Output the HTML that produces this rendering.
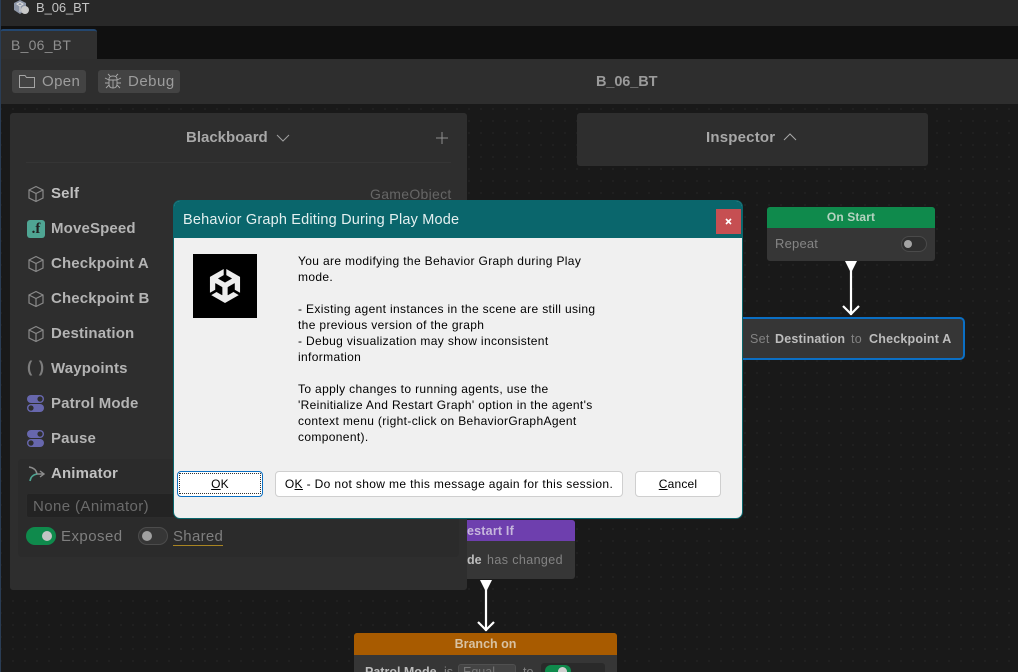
<!DOCTYPE html>
<html><head><meta charset="utf-8">
<style>
html,body{margin:0;padding:0;background:#1a1a1a}
#r{position:relative;width:1018px;height:672px;overflow:hidden;background-color:#191919;background-image:radial-gradient(circle at 1px 1px,#272727 0.6px,transparent 1px);background-size:12px 12px;font-family:"Liberation Sans",sans-serif}
#r div,#r span.a,#r svg{position:absolute}
.t{white-space:nowrap;line-height:16px}
.l{left:51px;font-size:15px;font-weight:bold;color:#b4b4b4;letter-spacing:.15px;white-space:nowrap;line-height:18px}
.d{left:298px;font-size:12px;color:#000;white-space:nowrap;line-height:16px;letter-spacing:.35px}
.b{background:#fff;border:1px solid #cfcfcf;border-radius:4px;box-sizing:border-box;height:26px;line-height:25px;font-size:12px;text-align:center;color:#000;white-space:nowrap;letter-spacing:.18px}
</style></head><body><div id="r">
<div style="left:0;top:0;width:1018px;height:26px;background:#282828"></div>
<div style="left:0;top:0;width:1px;height:672px;background:#2a3d55;z-index:5"></div>
<svg style="left:12px;top:0" width="18" height="16" viewBox="0 0 18 16"><path d="M2 3L8 0L14 3V10L8 14L2 10Z" fill="#8e97a8"/><path d="M5 4L8 2.5L11 4L8 6ZM8 6V12" stroke="#ddd" fill="none"/><circle cx="13" cy="10" r="4" fill="#c9c9c9"/></svg>
<div class="t" style="left:36px;top:0;font-size:13px;color:#c4c4c4;letter-spacing:-.1px">B_06_BT</div>
<div style="left:0;top:26px;width:1018px;height:33px;background:#101010"></div>
<div style="left:0;top:29px;width:97px;height:30px;background:#303030;border-top:2px solid #24476f;border-radius:3px 3px 0 0;box-sizing:border-box"></div>
<div class="t" style="left:11px;top:37px;font-size:14px;color:#8f8f8f;letter-spacing:.25px">B_06_BT</div>
<div style="left:0;top:59px;width:1018px;height:45px;background:#2e2e2e"></div>
<div style="left:12px;top:70px;width:74px;height:23px;background:#434343;border-radius:3px"></div>
<svg style="left:18px;top:73px" width="18" height="16" viewBox="0 0 18 16"><path d="M1.5 2.5H7L8.5 4.5H16.5V14.5H1.5Z" fill="none" stroke="#a5a5a5"/></svg>
<div class="t" style="left:42px;top:74px;font-size:15px;color:#9d9d9d;letter-spacing:.4px">Open</div>
<div style="left:98px;top:70px;width:82px;height:23px;background:#434343;border-radius:3px"></div>
<svg style="left:104px;top:72px" width="18" height="18" viewBox="0 0 18 18"><path d="M5 7Q5 4 9 4T13 7V12Q13 16 9 16T5 12ZM5 8H13M9 8V16M6 4L4 2M12 4L14 2M5 8L1 6M13 8L17 6M5 11H1M13 11H17M5 13L2 16M13 13L16 16" fill="none" stroke="#a8a8a8" stroke-width=".9"/></svg>
<div class="t" style="left:128px;top:74px;font-size:15px;color:#9d9d9d;letter-spacing:.5px">Debug</div>
<div class="t" style="left:596px;top:74px;font-size:14.5px;font-weight:bold;color:#9a9a9a;letter-spacing:-.1px">B_06_BT</div>

<div style="left:10px;top:113px;width:457px;height:477px;background:#2e2e2e;border-radius:3px"></div>
<div style="left:26px;top:162px;width:425px;height:1px;background:#353535"></div>
<div class="t" style="left:186px;top:130px;font-size:15px;font-weight:bold;color:#a8a8a8;letter-spacing:0">Blackboard</div>
<svg style="left:276px;top:133px" width="14" height="10"><path d="M1 2L7 8L13 2" fill="none" stroke="#a0a0a0"/></svg>
<svg style="left:436px;top:132px" width="12" height="12"><path d="M6 0V12M0 6H12" stroke="#8f8f8f"/></svg>
<div class="t" style="left:370px;top:186px;font-size:14px;color:#666;letter-spacing:.3px">GameObject</div>

<svg width="0" height="0"><defs><g id="c"><path d="M9 1.5L16 5V13L9 16.5L2 13V5ZM2 5L9 8.5L16 5M9 8.5V16.5" fill="none" stroke="#8a8a8a" stroke-width="1.2"/></g><g id="sw"><rect x="1" y="1" width="17" height="8" rx="4" fill="#6767ad"/><rect x="1" y="10" width="17" height="8" rx="4" fill="#6767ad"/><circle cx="14" cy="5" r="2.6" fill="#2e2e2e"/><circle cx="5" cy="14" r="2.6" fill="#2e2e2e"/></g></defs></svg>
<svg style="left:27px;top:185px" width="18" height="18"><use href="#c"/></svg>
<div class="l" style="top:185px;color:#c0c0c0">Self</div>
<div style="left:27px;top:220px;width:18px;height:18px;background:#4fa593;border-radius:3px;color:#202020;font:bold 15px/18px 'Liberation Serif',serif;text-align:center">.f</div>
<div class="l" style="top:220px">MoveSpeed</div>
<svg style="left:27px;top:255px" width="18" height="18"><use href="#c"/></svg>
<div class="l" style="top:255px">Checkpoint A</div>
<svg style="left:27px;top:290px" width="18" height="18"><use href="#c"/></svg>
<div class="l" style="top:290px">Checkpoint B</div>
<svg style="left:27px;top:325px" width="18" height="18"><use href="#c"/></svg>
<div class="l" style="top:325px">Destination</div>
<div class="t" style="left:27px;top:360px;font-size:16px;font-weight:bold;color:#7d7d7d;letter-spacing:1px">( )</div>
<div class="l" style="top:360px">Waypoints</div>
<svg style="left:26px;top:394px" width="19" height="19"><use href="#sw"/></svg>
<div class="l" style="top:395px">Patrol Mode</div>
<svg style="left:26px;top:429px" width="19" height="19"><use href="#sw"/></svg>
<div class="l" style="top:430px">Pause</div>
<div style="left:18px;top:459px;width:441px;height:98px;background:#2b2b2b;border-radius:4px"></div>
<svg style="left:27px;top:465px" width="18" height="18"><path d="M2 2Q9 3 10 9H17M13 6L17 9L13 12" fill="none" stroke="#8c8c8c" stroke-width="1.4"/><path d="M3 16Q4 10 10 9" fill="none" stroke="#4fa593" stroke-width="1.6"/></svg>
<div class="l" style="top:465px;color:#c0c0c0">Animator</div>
<div style="left:26px;top:493px;width:425px;height:25px;background:#232323;border:1px solid #2c2c2c;border-radius:3px;box-sizing:border-box"></div>
<div class="t" style="left:33px;top:499px;font-size:15px;color:#6b6b6b;letter-spacing:.4px">None (Animator)</div>
<div style="left:26px;top:527px;width:30px;height:18px;background:#0f8a4c;border-radius:9px"></div>
<div style="left:42px;top:531px;width:10px;height:10px;background:#c4c4c4;border-radius:50%"></div>
<div class="t" style="left:61px;top:529px;font-size:15px;color:#7f7f7f;letter-spacing:.45px">Exposed</div>
<div style="left:138px;top:527px;width:30px;height:18px;border:1px solid #4c4c4c;background:#363636;border-radius:9px;box-sizing:border-box"></div>
<div style="left:142px;top:531px;width:10px;height:10px;background:#a0a0a0;border-radius:50%"></div>
<div class="t" style="left:173px;top:529px;font-size:15px;color:#7f7f7f;letter-spacing:.3px;border-bottom:1px solid #a98522;height:16px;padding-bottom:0">Shared</div>

<div style="left:577px;top:113px;width:351px;height:53px;background:#2e2e2e;border-radius:3px"></div>
<div class="t" style="left:706px;top:130px;font-size:15px;font-weight:bold;color:#a8a8a8;letter-spacing:.2px">Inspector</div>
<svg style="left:783px;top:133px" width="14" height="9"><path d="M1 7L7 1L13 7" fill="none" stroke="#a8a8a8"/></svg>

<div style="left:767px;top:207px;width:168px;height:54px;background:#363636;border-radius:3px;overflow:hidden"><div style="left:0;top:0;width:168px;height:21px;background:#0f8a4c;color:#b5d3c0;font:bold 12px/21px 'Liberation Sans',sans-serif;text-align:center;letter-spacing:.1px">On Start</div></div>
<div class="t" style="left:775px;top:236px;font-size:13px;color:#858585;letter-spacing:.2px">Repeat</div>
<div style="left:901px;top:236px;width:26px;height:16px;border:1px solid #4a4a4a;border-radius:8px;box-sizing:border-box;background:#2f2f2f"></div>
<div style="left:904px;top:240px;width:8px;height:8px;background:#a4a4a4;border-radius:50%"></div>
<svg style="left:840px;top:260px" width="22" height="58"><path d="M5 1H17L11 13Z" fill="#fff"/><path d="M11 10V55" stroke="#fff" stroke-width="2.2"/><path d="M3 46L11 54L19 46" fill="none" stroke="#fff" stroke-width="2.2"/></svg>
<div style="left:730px;top:317px;width:235px;height:43px;background:#363636;border:2px solid #0b6fc4;border-radius:5px;box-sizing:border-box"></div>
<div class="t" style="left:750px;top:331px;font-size:12.5px;color:#838383;letter-spacing:.3px">Set</div>
<div class="t" style="left:775px;top:331px;font-size:12.5px;font-weight:bold;color:#bdbdbd;letter-spacing:.2px">Destination</div>
<div class="t" style="left:851px;top:331px;font-size:12.5px;color:#838383;letter-spacing:.3px">to</div>
<div class="t" style="left:869px;top:331px;font-size:12.5px;font-weight:bold;color:#bdbdbd;letter-spacing:.2px">Checkpoint A</div>

<div style="left:467px;top:520px;width:108px;height:59px;background:#363636;border-radius:0 3px 3px 0;overflow:hidden"><div style="left:0;top:0;width:108px;height:21px;background:#6e3fae"></div></div>
<div class="t" style="left:467px;top:523px;font-size:12.5px;font-weight:bold;color:#c6b7dc;letter-spacing:.2px">estart If</div>
<div class="t" style="left:467px;top:552px;font-size:12.5px;font-weight:bold;color:#bdbdbd">de</div>
<div class="t" style="left:487px;top:552px;font-size:12.5px;color:#838383;letter-spacing:.4px">has changed</div>
<svg style="left:475px;top:579px" width="22" height="54"><path d="M5 1H17L11 13Z" fill="#fff"/><path d="M11 10V52" stroke="#fff" stroke-width="2.2"/><path d="M3 43L11 51L19 43" fill="none" stroke="#fff" stroke-width="2.2"/></svg>
<div style="left:354px;top:633px;width:263px;height:39px;background:#363636;border-radius:3px 3px 0 0;overflow:hidden"><div style="left:0;top:0;width:263px;height:22px;background:#a85b00;color:#d8c2a2;font:bold 12.5px/22px 'Liberation Sans',sans-serif;text-align:center;letter-spacing:0">Branch on</div></div>
<div class="t" style="left:365px;top:664px;font-size:12.5px;font-weight:bold;color:#bdbdbd">Patrol Mode</div>
<div class="t" style="left:444px;top:664px;font-size:12.5px;color:#838383">is</div>
<div style="left:458px;top:664px;width:58px;height:16px;background:#444;border-radius:3px;border:1px solid #505050;box-sizing:border-box"></div>
<div class="t" style="left:463px;top:664px;font-size:12.5px;color:#777">Equal</div>
<div class="t" style="left:523px;top:664px;font-size:12.5px;color:#838383">to</div>
<div style="left:541px;top:663px;width:64px;height:12px;background:#2a2a2a;border-radius:3px"></div>
<div style="left:545px;top:665px;width:26px;height:12px;background:#0f8a4c;border-radius:6px"></div>
<div style="left:558px;top:667px;width:9px;height:9px;background:#cfcfcf;border-radius:50%"></div>

<div style="left:173px;top:200px;width:570px;height:319px;background:#f0f0f0;border:1px solid #0a666c;border-radius:7px;box-sizing:border-box;overflow:hidden;z-index:1"><div style="left:0;top:0;width:570px;height:37px;background:#0a666c"></div></div>
<div style="z-index:2;left:0;top:0;width:1018px;height:672px">
<div class="t" style="left:183px;top:212px;font-size:14.5px;color:#e4f0f0;letter-spacing:.18px">Behavior Graph Editing During Play Mode</div>
<div style="left:716px;top:209px;width:25px;height:25px;background:#c64f52"></div>
<svg style="left:725px;top:218px" width="7" height="7"><path d="M1 1L6 6M6 1L1 6" stroke="#fff" stroke-width="1.6"/></svg>
<div style="left:193px;top:254px;width:64px;height:64px;background:#000"></div>
<svg style="left:208px;top:269px" width="34" height="34" viewBox="0 0 24 24"><path fill="#eee" d="m12.9288 4.2939 3.7997 2.1929c.1366.077.1415.2905 0 .3675l-4.515 2.6076a.4192.4192 0 0 1-.4246 0L7.274 6.8543c-.139-.0745-.1415-.293 0-.3675l3.7972-2.193V0L1.3758 5.5977V16.793l3.7177-2.1456v-4.3858c-.0025-.1565.1813-.2682.318-.1838l4.5148 2.6076a.4252.4252 0 0 1 .2136.3676v5.2127c.0025.1565-.1813.2682-.3179.1838l-3.7996-2.1929-3.7177 2.1457L12 24l9.6954-5.5977-3.7177-2.1457-3.7996 2.1929c-.1341.082-.3229-.0248-.3179-.1838V13.0533c0-.1565.0894-.2956.2136-.3676l4.5149-2.6076c.134-.082.3228.0224.3179.1838v4.3858l3.7177 2.1456V5.5977L12.9288 0Z"/></svg>
<div class="d" style="top:253px">You are modifying the Behavior Graph during Play</div>
<div class="d" style="top:269px">mode.</div>
<div class="d" style="top:301px">- Existing agent instances in the scene are still using</div>
<div class="d" style="top:317px">the previous version of the graph</div>
<div class="d" style="top:333px">- Debug visualization may show inconsistent</div>
<div class="d" style="top:349px">information</div>
<div class="d" style="top:381px">To apply changes to running agents, use the</div>
<div class="d" style="top:397px">'Reinitialize And Restart Graph' option in the agent's</div>
<div class="d" style="top:413px">context menu (right-click on BehaviorGraphAgent</div>
<div class="d" style="top:429px">component).</div>
<div class="b" style="left:177px;top:471px;width:86px;border:1.5px solid #0a6fc2"><span style="display:block;margin:1px;border:1px dotted #333;line-height:20px;height:19px"><u>O</u>K</span></div>
<div class="b" style="left:275px;top:471px;width:348px;letter-spacing:.36px">O<u>K</u> - Do not show me this message again for this session.</div>
<div class="b" style="left:635px;top:471px;width:86px"><u>C</u>ancel</div>
</div>
</div></body></html>
